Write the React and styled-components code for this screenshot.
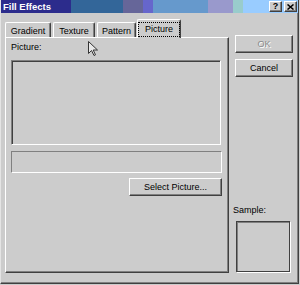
import React from 'react';
import styled, {createGlobalStyle} from 'styled-components';

const Global = createGlobalStyle`
  html, body {
    margin: 0;
    padding: 0;
    background: #cccccc;
  }
  * { box-sizing: border-box; }
`;

const Window = styled.div`
  position: relative;
  width: 299px;
  height: 284px;
  background: #cccccc;
  border-left: 1px solid #e4e4e4;
  border-right: 1px solid #404040;
  border-bottom: 1px solid #404040;
  box-shadow: inset -1px -1px 0 #808080;
  font-family: "Liberation Sans", Arial, sans-serif;
  font-size: 9px;
  color: #000;
  overflow: hidden;
`;

const TitleBar = styled.div`
  height: 13px;
  display: flex;
  align-items: center;
  justify-content: space-between;
  padding: 0 1px 0 2px;
  background: linear-gradient(to right,
    #2c2c8c 0, #2c2c8c 70px,
    #336699 70px, #336699 122px,
    #666699 122px, #666699 142px,
    #6666cc 142px, #6666cc 152px,
    #6699cc 152px, #6699cc 207px,
    #9999cc 207px, #9999cc 232px,
    #99cccc 232px, #99cccc 242px,
    #99ccff 242px, #99ccff 100%);
`;

const Title = styled.span`
  color: #fff;
  font-weight: bold;
  font-size: 9.5px;
  line-height: 13px;
`;

const Caps = styled.div`
  display: flex;
  gap: 2px;
`;

const CapButton = styled.div`
  width: 13px;
  height: 11px;
  display: flex;
  align-items: center;
  justify-content: center;
  background: #cccccc;
  border-top: 1px solid #fff;
  border-left: 1px solid #fff;
  border-right: 1px solid #404040;
  border-bottom: 1px solid #404040;
  box-shadow: inset -1px -1px 0 #808080;
  font-weight: bold;
  font-size: 9px;
  line-height: 9px;
`;

const Body = styled.div`
  display: flex;
  height: 270px;
  padding: 6px 0 0 4px;
`;

const LeftCol = styled.div`
  width: 224px;
  display: flex;
  flex-direction: column;
`;

const TabStrip = styled.div`
  height: 18px;
  display: flex;
  align-items: flex-end;
  position: relative;
  z-index: 1;
`;

const Tab = styled.div`
  width: ${p => p.$w}px;
  height: ${p => (p.$active ? 19 : 15)}px;
  margin-right: ${p => p.$gap}px;
  margin-bottom: ${p => (p.$active ? -1 : 0)}px;
  display: flex;
  align-items: ${p => (p.$active ? 'flex-start' : 'center')};
  padding-top: ${p => (p.$active ? 2 : 1)}px;
  justify-content: center;
  background: #cccccc;
  border-top: 1px solid #fff;
  border-left: 1px solid #fff;
  border-right: 1px solid #404040;
  border-radius: 2px 2px 0 0;
  box-shadow: inset -1px 0 0 #808080;
  white-space: nowrap;
`;

const Focus = styled.span`
  border: 1px dotted #000;
  padding: 1px 6px 2px 6px;
  line-height: 10px;
`;

const Panel = styled.div`
  height: 236px;
  border-top: 1px solid #fff;
  border-left: 1px solid #fff;
  border-right: 1px solid #404040;
  border-bottom: 1px solid #404040;
  box-shadow: inset -1px -1px 0 #808080;
  padding: 4px 5px 0 5px;
  display: flex;
  flex-direction: column;
`;

const Label = styled.div`
  line-height: 11px;
  height: 11px;
`;

const PictureBox = styled.div`
  width: 210px;
  height: 85px;
  margin-top: 7px;
  border-top: 1px solid #808080;
  border-left: 1px solid #808080;
  border-right: 1px solid #fff;
  border-bottom: 1px solid #fff;
  box-shadow: inset 1px 1px 0 #404040;
`;

const Field = styled.div`
  width: 211px;
  height: 22px;
  margin-top: 6px;
  border-top: 1px solid #808080;
  border-left: 1px solid #808080;
  border-right: 1px solid #fff;
  border-bottom: 1px solid #fff;
`;

const Button = styled.div`
  width: ${p => p.$w}px;
  height: 18px;
  margin: ${p => p.$m || '0'};
  display: flex;
  align-items: center;
  justify-content: center;
  background: #cccccc;
  border-top: 1px solid #fff;
  border-left: 1px solid #fff;
  border-right: 1px solid #404040;
  border-bottom: 1px solid #404040;
  box-shadow: inset -1px -1px 0 #808080;
  color: ${p => (p.$disabled ? '#8a8a8a' : '#000')};
  text-shadow: ${p => (p.$disabled ? '1px 1px 0 #fff' : 'none')};
  white-space: nowrap;
`;

const RightCol = styled.div`
  width: 60px;
  margin-left: 4px;
  display: flex;
  flex-direction: column;
  padding-top: 16px;
`;

const SampleGroup = styled.div`
  margin-top: auto;
  display: flex;
  flex-direction: column;
  margin-bottom: 11px;
`;

const SampleBox = styled.div`
  width: 54px;
  height: 51px;
  margin: 5px 0 0 3px;
  border: 1px solid #404040;
  box-shadow: 1px 1px 0 #fff, inset 1px 1px 0 #808080;
`;

const Cursor = styled.svg`
  position: absolute;
  left: 87px;
  top: 41px;
`;

export default function App() {
  return (
    <>
      <Global />
      <Window>
        <TitleBar>
          <Title>Fill Effects</Title>
          <Caps>
            <CapButton>?</CapButton>
            <CapButton>
              <svg width="7" height="6" viewBox="0 0 7 6">
                <path d="M0.5 0.5 L6.5 5.5 M6.5 0.5 L0.5 5.5" stroke="#000" strokeWidth="1.5" fill="none" />
              </svg>
            </CapButton>
          </Caps>
        </TitleBar>
        <Body>
          <LeftCol>
            <TabStrip>
              <Tab $w={46} $gap={2}>Gradient</Tab>
              <Tab $w={42} $gap={2}>Texture</Tab>
              <Tab $w={39} $gap={1}>Pattern</Tab>
              <Tab $w={44} $gap={0} $active><Focus>Picture</Focus></Tab>
            </TabStrip>
            <Panel>
              <Label>Picture:</Label>
              <PictureBox />
              <Field />
              <Button $w={93} $m="5px 0 0 118px">Select Picture...</Button>
            </Panel>
          </LeftCol>
          <RightCol>
            <Button $w={58} $m="0 0 0 2px" $disabled>OK</Button>
            <Button $w={58} $m="6px 0 0 2px">Cancel</Button>
            <SampleGroup>
              <Label>Sample:</Label>
              <SampleBox />
            </SampleGroup>
          </RightCol>
        </Body>
        <Cursor width="11" height="16" viewBox="0 0 11 16">
          <path d="M0.5 0.5 L0.5 12.5 L3.5 9.5 L6 14.5 L7.5 13.8 L5.2 9 L9.5 9 Z" fill="#e8e8e8" stroke="#333" strokeWidth="1" />
        </Cursor>
      </Window>
    </>
  );
}
